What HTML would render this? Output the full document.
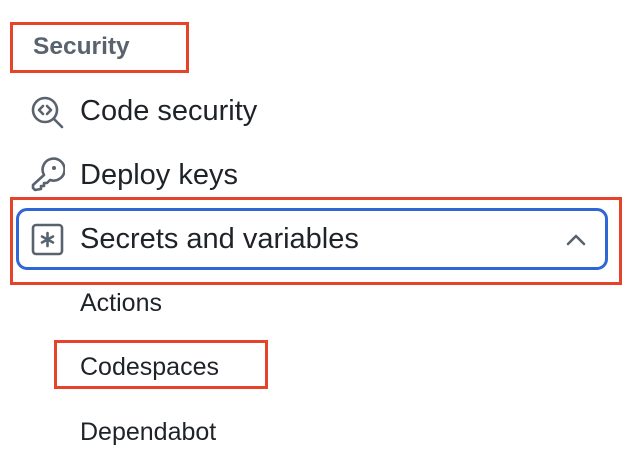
<!DOCTYPE html>
<html><head><meta charset="utf-8"><style>
body{margin:0;width:642px;height:476px;background:#fff;position:relative;overflow:hidden;font-family:"Liberation Sans",Arial,sans-serif;color:#1f2328}
.a{position:absolute;white-space:nowrap;line-height:1.15}
.box{position:absolute;box-sizing:border-box}
</style></head><body>
<div class="box" style="left:10px;top:22px;width:179px;height:51px;border:3px solid #e5432a"></div>
<div class="a" style="left:33px;top:33px;font-size:24.5px;font-weight:bold;color:#59636e">Security</div>

<svg class="a" style="left:31px;top:96px" width="34" height="33" viewBox="0 0 34 33" fill="none" stroke="#59636e" stroke-width="2.6" stroke-linecap="round" stroke-linejoin="round">
<circle cx="14" cy="14" r="12"/><path d="M23 23l8 8"/><path d="M12 10l-4 4 4 4M16 10l4 4-4 4"/></svg>
<div class="a" style="left:80px;top:95px;font-size:29px">Code security</div>

<svg class="a" style="left:31px;top:157px" width="34" height="36" viewBox="0 0 34 36" fill="none" stroke="#59636e" stroke-width="2.6" stroke-linejoin="round" stroke-linecap="round">
<path d="M13 18 A11 11 0 1 1 19 23 L16 26 L13 26 L13 29 L10 29 L10 32 L4 33 L2 31 L2 28 Z"/><circle cx="23" cy="11" r="2" fill="#59636e" stroke="none"/></svg>
<div class="a" style="left:80px;top:159px;font-size:29px">Deploy keys</div>

<div class="box" style="left:10px;top:197px;width:612px;height:88px;border:3px solid #e5432a"></div>
<div class="box" style="left:16px;top:208px;width:592px;height:62px;border:3px solid #2f67d6;border-radius:11px"></div>
<svg class="a" style="left:31px;top:223px" width="34" height="33" viewBox="0 0 34 33" fill="none" stroke="#59636e" stroke-width="2.6" stroke-linecap="round">
<rect x="2" y="2" width="29" height="29" rx="3"/><path d="M16.5 10v13M11 13.5l11 6M22 13.5l-11 6"/></svg>
<div class="a" style="left:80px;top:223px;font-size:29px">Secrets and variables</div>
<svg class="a" style="left:565px;top:232px" width="22" height="15" viewBox="0 0 22 15" fill="none" stroke="#59636e" stroke-width="2.6" stroke-linecap="round" stroke-linejoin="round"><path d="M3 12l8-8 8 8"/></svg>

<div class="a" style="left:80px;top:289px;font-size:25px">Actions</div>
<div class="box" style="left:54px;top:340px;width:214px;height:49px;border:3px solid #e5432a"></div>
<div class="a" style="left:80px;top:353px;font-size:25px">Codespaces</div>
<div class="a" style="left:80px;top:418px;font-size:25px">Dependabot</div>
</body></html>
